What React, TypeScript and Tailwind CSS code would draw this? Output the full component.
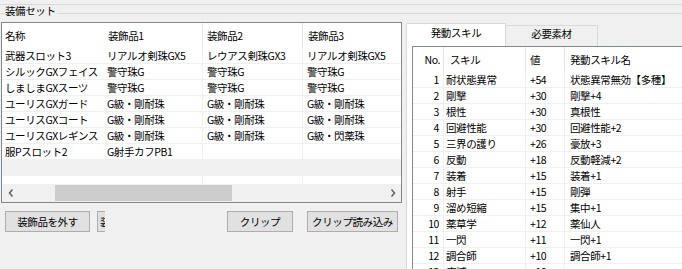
import React from "react";

const gearRows = [
    ["武器スロット3", "リアルオ剣珠GX5", "レウアス剣珠GX3", "リアルオ剣珠GX5"],
    ["シルックGXフェイス", "警守珠G", "警守珠G", "警守珠G"],
    ["しましまGXスーツ", "警守珠G", "警守珠G", "警守珠G"],
    ["ユーリスGXガード", "G級・剛耐珠", "G級・剛耐珠", "G級・剛耐珠"],
    ["ユーリスGXコート", "G級・剛耐珠", "G級・剛耐珠", "G級・剛耐珠"],
    ["ユーリスGXレギンス", "G級・剛耐珠", "G級・剛耐珠", "G級・閃薬珠"],
    ["服Pスロット2", "G射手カフPB1", "", ""],
];

const skills = [
    [1, "耐状態異常", "+54", "状態異常無効【多種】"],
    [2, "剛撃", "+30", "剛撃+4"],
    [3, "根性", "+30", "真根性"],
    [4, "回避性能", "+30", "回避性能+2"],
    [5, "三界の護り", "+26", "豪放+3"],
    [6, "反動", "+18", "反動軽減+2"],
    [7, "装着", "+15", "装着+1"],
    [8, "射手", "+15", "剛弾"],
    [9, "溜め短縮", "+15", "集中+1"],
    [10, "薬草学", "+12", "薬仙人"],
    [11, "一閃", "+11", "一閃+1"],
    [12, "調合師", "+10", "調合師+1"],
    [13, "広域", "+10", ""],
];

function Chevron({ dir }: { dir: "left" | "right" }) {
    return (
        <svg width="6" height="8" viewBox="0 0 6 8">
            <polyline
                points={dir === "left" ? "4.5,0.5 1.5,4 4.5,7.5" : "1.5,0.5 4.5,4 1.5,7.5"}
                fill="none"
                stroke="#606060"
                strokeWidth="1.5"
            />
        </svg>
    );
}

function GearGrid() {
    return (
        <div className="h-[181px] border border-[#828790] bg-white flex flex-col overflow-hidden">
            <div className="h-[25px] flex shrink-0">
                <div className="w-[100px] pl-[3px] leading-[25px]">名称</div>
                <div className="w-[100px] pl-[6px] leading-[25px]">装飾品1</div>
                <div className="w-[100px] pl-[4px] leading-[25px] border-l border-[#e5e5e5]">装飾品2</div>
                <div className="flex-1 pl-[5px] leading-[25px] border-l border-[#e5e5e5] whitespace-nowrap">装飾品3</div>
            </div>
            {gearRows.map((r, i) => (
                <div key={i} className="h-[16px] flex shrink-0 border-b border-[#f0f0f0] leading-[15px] whitespace-nowrap">
                    <div className="w-[100px] pl-[3px] overflow-hidden">{r[0]}</div>
                    <div className="w-[100px] pl-[5px] overflow-hidden">{r[1]}</div>
                    <div className="w-[100px] pl-[4px] overflow-hidden border-l border-[#f0f0f0]">{r[2]}</div>
                    <div className="flex-1 pl-[4px] overflow-hidden border-l border-[#f0f0f0]">{r[3]}</div>
                </div>
            ))}
            <div className="h-[16px] shrink-0 bg-[#f0f0f0]" />
            <div className="h-[8px] flex shrink-0">
                <div className="w-[200px]" />
                <div className="w-[100px] border-l border-[#f0f0f0]" />
                <div className="flex-1 border-l border-[#f0f0f0]" />
            </div>
            <div className="h-[18px] flex items-center bg-[#f0f0f0] shrink-0">
                <div className="w-[17px] flex justify-center"><Chevron dir="left" /></div>
                <div className="w-[36px]" />
                <div className="w-[177px] h-[16px] bg-[#cdcdcd]" />
                <div className="flex-1" />
                <div className="w-[17px] flex justify-center"><Chevron dir="right" /></div>
            </div>
        </div>
    );
}

function SkillList() {
    return (
        <div className="flex-1 border-l border-t border-[#828790] bg-white overflow-hidden">
            <div className="h-[25px] flex leading-[25px] whitespace-nowrap">
                <div className="w-[30px] text-right pr-[3px]">No.</div>
                <div className="w-[82px] pl-[6px] border-l border-[#e5e5e5]">スキル</div>
                <div className="w-[39px] pl-[4px] border-l border-[#e5e5e5]">値</div>
                <div className="flex-1 pl-[5px] border-l border-[#e5e5e5]">発動スキル名</div>
            </div>
            {skills.map((s) => (
                <div key={s[0]} className="h-[16px] flex border-b border-[#f0f0f0] leading-[15px] whitespace-nowrap">
                    <div className="w-[30px] text-right pr-[4px]">{s[0]}</div>
                    <div className="w-[82px] pl-[2px] border-l border-[#f0f0f0]">{s[1]}</div>
                    <div className="w-[39px] pl-[4px] border-l border-[#f0f0f0]">{s[2]}</div>
                    <div className="flex-1 pl-[5px] border-l border-[#f0f0f0]">{s[3]}</div>
                </div>
            ))}
        </div>
    );
}

export default function App() {
    return (
        <div className="w-[682px] h-[269px] bg-[#f0f0f0] overflow-hidden flex flex-col text-[10.5px] tracking-[-0.4px] text-black font-['Noto_Sans_CJK_JP',sans-serif]">
            <div className="h-[22px] pt-[4px] shrink-0">
                <div className="h-[10px] border-t border-b border-[#d9d9d9] relative">
                    <span className="absolute left-[5px] top-0 leading-[12px] bg-[#f0f0f0] pr-[1px]">装備セット</span>
                </div>
            </div>
            <div className="flex flex-1 min-h-0">
                <div className="ml-[1px] w-[401px] flex flex-col">
                    <GearGrid />
                    <div className="flex mt-[8px] h-[21px]">
                        <button className="ml-[4px] w-[85px] border border-[#adadad] bg-[#e1e1e1] leading-[19px]">装飾品を外す</button>
                        <div className="ml-[7px] w-[8px] border-l border-y border-[#adadad] bg-[#e1e1e1] overflow-hidden pl-[2px] leading-[19px] whitespace-nowrap">装</div>
                        <button className="ml-[122px] w-[66px] border border-[#adadad] bg-[#e1e1e1] leading-[19px]">クリップ</button>
                        <button className="ml-[14px] w-[91px] border border-[#adadad] bg-[#e1e1e1] leading-[19px] whitespace-nowrap">クリップ読み込み</button>
                    </div>
                </div>
                <div className="ml-[4px] flex-1 flex flex-col min-w-0">
                    <div className="h-[24px] flex items-end shrink-0">
                        <div className="w-[100px] h-[23px] border-l border-t border-r border-[#d9d9d9] bg-white text-center pt-[2px] leading-[14px]">発動スキル</div>
                        <div className="w-[92px] h-[21px] border-t border-r border-[#d9d9d9] bg-[#f0f0f0] text-center pt-[1px] leading-[14px]">必要素材</div>
                    </div>
                    <div className="flex-1 flex border-l border-[#d9d9d9] bg-white pl-[5px] min-h-0">
                        <SkillList />
                    </div>
                </div>
            </div>
        </div>
    );
}
